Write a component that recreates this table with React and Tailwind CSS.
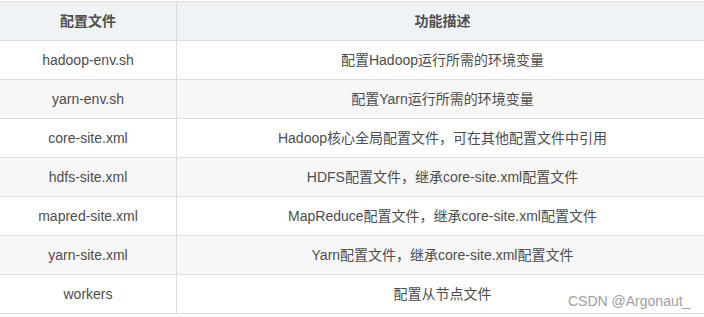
export default function App() {
  const rows = [
    ["hadoop-env.sh", "配置Hadoop运行所需的环境变量"],
    ["yarn-env.sh", "配置Yarn运行所需的环境变量"],
    ["core-site.xml", "Hadoop核心全局配置文件，可在其他配置文件中引用"],
    ["hdfs-site.xml", "HDFS配置文件，继承core-site.xml配置文件"],
    ["mapred-site.xml", "MapReduce配置文件，继承core-site.xml配置文件"],
    ["yarn-site.xml", "Yarn配置文件，继承core-site.xml配置文件"],
    ["workers", "配置从节点文件"],
  ];
  return (
    <div className="relative w-[704px] h-[317px] bg-white pt-px" style={{ fontFamily: '"Liberation Sans", Arial, "Noto Sans CJK SC", sans-serif' }}>
      <div className="w-[704px] border-t border-[#dddddd]">
        <div className="grid grid-cols-[177px_1fr] h-[39px] bg-[#eff3f5] border-b border-[#dddddd] text-[14px] font-bold text-[#4f4f4f]">
          <div className="flex items-center justify-center border-r border-[#dddddd]">配置文件</div>
          <div className="flex items-center justify-center pl-[4px]">功能描述</div>
        </div>
        {rows.map((r, i) => (
          <div key={i} className={`grid grid-cols-[177px_1fr] h-[39px] border-b border-[#dddddd] text-[14px] text-[#4d4d4d] ${i % 2 === 1 ? "bg-[#f7f7f7]" : "bg-white"}`}>
            <div className="flex items-center justify-center border-r border-[#dddddd]">{r[0]}</div>
            <div className="flex items-center justify-center pl-[4px]">{r[1]}</div>
          </div>
        ))}
      </div>
      <div className="absolute left-[568px] top-[291px] text-[14px] text-[#a0a0a0]">CSDN @Argonaut_</div>
    </div>
  );
}
